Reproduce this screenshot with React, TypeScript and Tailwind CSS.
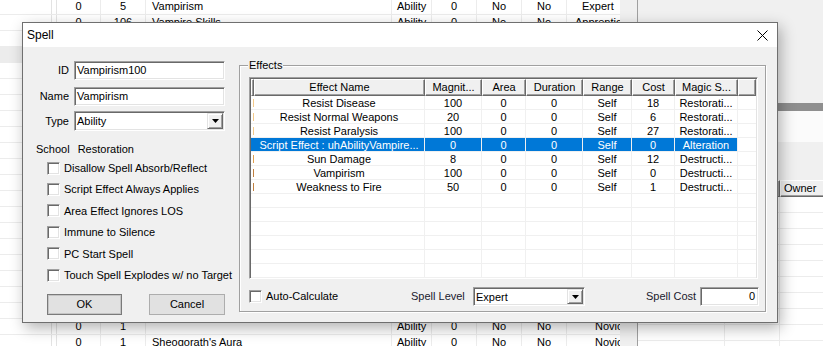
import React from "react";

const sunken =
  "border border-t-[#a0a0a0] border-l-[#a0a0a0] border-b-white border-r-white shadow-[inset_1px_1px_0_#696969,inset_-1px_-1px_0_#e3e3e3]";
const raised =
  "border border-t-[#e3e3e3] border-l-[#e3e3e3] border-b-[#696969] border-r-[#696969] shadow-[inset_1px_1px_0_#ffffff,inset_-1px_-1px_0_#a0a0a0] bg-[#f0f0f0]";
const headerCell =
  "h-full shrink-0 flex items-center justify-center overflow-hidden whitespace-nowrap border-t border-l border-t-white border-l-white border-r border-b border-r-[#696969] border-b-[#696969] shadow-[inset_-1px_-1px_0_#a0a0a0] bg-[#f0f0f0]";

type BgRow = { c: string[]; last: string; lastCls: string; sel?: boolean };

const emptyRow: BgRow = { c: ["", "", "", "", "", "", ""], last: "", lastCls: "" };

const bgRows: BgRow[] = [
  { c: ["0", "5", "Vampirism", "Ability", "0", "No", "No"], last: "Expert", lastCls: "pl-[15px]" },
  { c: ["0", "106", "Vampire Skills", "Ability", "0", "No", "No"], last: "Apprentice", lastCls: "pl-[8px]" },
  emptyRow,
  { ...emptyRow, sel: true },
  ...Array.from({ length: 16 }, () => emptyRow),
  { c: ["0", "1", "", "Ability", "0", "No", "No"], last: "Novice", lastCls: "pl-[28px]" },
  { c: ["0", "1", "Sheogorath's Aura", "Ability", "0", "No", "No"], last: "Novice", lastCls: "pl-[28px]" },
];

function BackgroundList() {
  return (
    <div className="w-[620px] h-full bg-white overflow-hidden shrink-0">
      <div className="mt-[-1px]">
        {bgRows.map((r, i) => (
          <div
            key={i}
            className={`flex h-[16px] border-b border-[#ececec] ${r.sel ? "bg-[#ececec]" : ""}`}
          >
            <div className="w-[52px] shrink-0 border-r border-[#e3e3e3]" />
            <div className="w-[5px] shrink-0 border-r border-[#e3e3e3]" />
            <div className="w-[44px] shrink-0 border-r border-[#ececec] text-center leading-[15px]">{r.c[0]}</div>
            <div className="w-[45px] shrink-0 border-r border-[#ececec] text-center leading-[15px]">{r.c[1]}</div>
            <div className="w-[246px] shrink-0 border-r border-[#ececec] pl-[6px] leading-[15px] whitespace-nowrap">{r.c[2]}</div>
            <div className="w-[40px] shrink-0 border-r border-[#ececec] pl-[5px] leading-[15px]">{r.c[3]}</div>
            <div className="w-[45px] shrink-0 border-r border-[#ececec] text-center leading-[15px]">{r.c[4]}</div>
            <div className="w-[45px] shrink-0 border-r border-[#ececec] text-center leading-[15px]">{r.c[5]}</div>
            <div className="w-[45px] shrink-0 border-r border-[#ececec] text-center leading-[15px]">{r.c[6]}</div>
            <div className={`w-[80px] shrink-0 leading-[15px] whitespace-nowrap ${r.lastCls}`}>{r.last}</div>
          </div>
        ))}
      </div>
    </div>
  );
}

function RightPane() {
  return (
    <div className="flex-1 flex flex-col border-l border-[#a0a0a0] bg-[#f0f0f0] overflow-hidden">
      <div className="h-[103px] shrink-0" />
      <div className="h-[8px] shrink-0 bg-[#8f8f8f]" />
      <div className="h-[31px] shrink-0 bg-[#fbfbfb]" />
      <div className="h-[38px] shrink-0" />
      <div className="flex h-[17px] shrink-0">
        <div className={`${headerCell} w-[142px]`} />
        <div className={`${headerCell} w-[80px] !justify-start pl-[3px]`}>Owner</div>
      </div>
      <div className="flex-1 bg-white">
        {Array.from({ length: 10 }).map((_, i) => (
          <div key={i} className="flex h-[16px] border-b border-[#ececec]">
            <div className="w-[87px] border-r border-[#ececec]" />
            <div className="w-[55px] border-r border-[#ececec]" />
          </div>
        ))}
      </div>
    </div>
  );
}

function Checkbox({ label }: { label: string }) {
  return (
    <div className="flex items-center h-[21.4px] pl-[24px]">
      <div className={`w-[13px] h-[13px] bg-white shrink-0 ${sunken}`} />
      <span className="ml-[4px] whitespace-nowrap">{label}</span>
    </div>
  );
}

function DropArrow() {
  return (
    <div className={`w-[16px] h-full shrink-0 flex items-center justify-center ${raised}`}>
      <svg width="7" height="4" viewBox="0 0 7 4">
        <polygon points="0,0 7,0 3.5,4" fill="#000" />
      </svg>
    </div>
  );
}

const cols = [3, 171, 57, 44, 57, 49, 43, 63];
const colW = ["w-[3px]", "w-[171px]", "w-[57px]", "w-[44px]", "w-[57px]", "w-[49px]", "w-[43px]", "w-[63px]"];
const headers = ["", "Effect Name", "Magnit...", "Area", "Duration", "Range", "Cost", "Magic S..."];

type Eff = { v: string[]; sel?: boolean; mark: string };
const effects: Eff[] = [
  { v: ["Resist Disease", "100", "0", "0", "Self", "18", "Restorati..."], mark: "bg-[#f3c98a]" },
  { v: ["Resist Normal Weapons", "20", "0", "0", "Self", "6", "Restorati..."], mark: "bg-[#f3c98a]" },
  { v: ["Resist Paralysis", "100", "0", "0", "Self", "27", "Restorati..."], mark: "bg-[#f3c98a]" },
  { v: ["Script Effect : uhAbilityVampire...", "0", "0", "0", "Self", "0", "Alteration"], sel: true, mark: "" },
  { v: ["Sun Damage", "8", "0", "0", "Self", "12", "Destructi..."], mark: "bg-[#e0a050]" },
  { v: ["Vampirism", "100", "0", "0", "Self", "0", "Destructi..."], mark: "bg-[#c08040]" },
  { v: ["Weakness to Fire", "50", "0", "0", "Self", "1", "Destructi..."], mark: "bg-[#c08040]" },
];

function EffectsList() {
  const blank = 7;
  return (
    <div className={`w-[509px] h-[202px] bg-white overflow-hidden p-[1px] ${sunken}`}>
      <div className="flex h-[17px]">
        {headers.map((h, i) => (
          <div key={i} className={`${headerCell} ${colW[i]}`}>
            {h}
          </div>
        ))}
        <div className={`${headerCell} flex-1`} />
      </div>
      {effects.map((e, r) => (
        <div key={r} className="flex h-[14px]">
          <div
            className={`${colW[0]} shrink-0 h-full flex items-center border-b border-[#f0f0f0] ${
              e.sel ? "bg-[#0078d7]" : ""
            }`}
          >
            {e.mark && <div className={`ml-[2px] w-[1px] h-[8px] ${e.mark}`} />}
          </div>
          {e.v.map((t, c) => (
            <div
              key={c}
              className={`${colW[c + 1]} shrink-0 h-full border-r border-b border-[#f0f0f0] text-center leading-[15px] whitespace-nowrap overflow-hidden ${
                e.sel ? "bg-[#0078d7] text-white" : ""
              }`}
            >
              {t}
            </div>
          ))}
          <div className="flex-1 h-full border-b border-[#f0f0f0]" />
        </div>
      ))}
      {Array.from({ length: blank }).map((_, r) => (
        <div key={r} className="flex h-[14px]">
          {cols.map((_, c) => (
            <div
              key={c}
              className={`${colW[c]} shrink-0 h-full border-b border-[#f0f0f0] ${c > 0 ? "border-r" : ""}`}
            />
          ))}
          <div className="flex-1 h-full border-b border-[#f0f0f0]" />
        </div>
      ))}
    </div>
  );
}

function Dialog() {
  return (
    <div className="absolute left-[22px] top-[22px] w-[756px] h-[301px] border border-[#6f6f6f] bg-[#f0f0f0] shadow-[3px_5px_14px_rgba(0,0,0,0.3)] flex flex-col">
      <div className="h-[24px] shrink-0 bg-white flex items-center justify-between pl-[4px]">
        <span className="text-[12px] leading-[14px]">Spell</span>
        <svg width="11" height="11" viewBox="0 0 11 11" className="mr-[9px]">
          <path d="M0.5 0.5 L10.5 10.5 M10.5 0.5 L0.5 10.5" stroke="#000" strokeWidth="1" />
        </svg>
      </div>
      <div className="flex-1 flex">
        {/* left column */}
        <div className="w-[216px] shrink-0 pt-[14px] flex flex-col">
          <div className="grid grid-cols-[46px_151px] gap-x-[5px] items-center">
            <span className="text-right leading-[19px]">ID</span>
            <div className={`h-[19px] bg-white flex items-center pl-[2px] ${sunken}`}>Vampirism100</div>
          </div>
          <div className="grid grid-cols-[46px_151px] gap-x-[5px] items-center mt-[7px]">
            <span className="text-right leading-[19px]">Name</span>
            <div className={`h-[19px] bg-white flex items-center pl-[2px] ${sunken}`}>Vampirism</div>
          </div>
          <div className="grid grid-cols-[46px_151px] gap-x-[5px] items-center mt-[5px]">
            <span className="text-right leading-[19px]">Type</span>
            <div className={`h-[20px] bg-white flex p-[1px] ${sunken}`}>
              <span className="flex-1 pl-[1px] leading-[16px]">Ability</span>
              <DropArrow />
            </div>
          </div>
          <div className="flex items-center h-[14px] mt-[11px] pl-[13px]">
            <span>School</span>
            <span className="ml-[8px]">Restoration</span>
          </div>
          <div className="mt-[1.5px] flex flex-col">
            <Checkbox label="Disallow Spell Absorb/Reflect" />
            <Checkbox label="Script Effect Always Applies" />
            <Checkbox label="Area Effect Ignores LOS" />
            <Checkbox label="Immune to Silence" />
            <Checkbox label="PC Start Spell" />
            <Checkbox label="Touch Spell Explodes w/ no Target" />
          </div>
          <div className="flex pl-[24px] gap-[27px] mt-[8px]">
            <button className="w-[75px] h-[21px] bg-[#e1e1e1] border border-[#7a7a7a] shadow-[inset_0_0_0_1px_#c4c4c4] text-[11px] leading-[19px]">
              OK
            </button>
            <button className="w-[76px] h-[21px] bg-[#e1e1e1] border border-[#adadad] text-[11px] leading-[19px]">
              Cancel
            </button>
          </div>
        </div>
        {/* effects group */}
        <div className="mt-[18px] w-[527px] h-[247px] relative border border-[#a0a0a0] shadow-[inset_1px_1px_0_#ffffff,1px_1px_0_#ffffff] pt-[11px] pl-[9px] flex flex-col">
          <span className="absolute left-[8px] top-[-8px] px-[1px] bg-[#f0f0f0] leading-[14px]">Effects</span>
          <EffectsList />
          <div className="flex items-center h-[19px] mt-[8px]">
            <div className="w-[162px] shrink-0 flex items-center">
              <div className={`w-[13px] h-[13px] bg-white shrink-0 ${sunken}`} />
              <span className="ml-[4px]">Auto-Calculate</span>
            </div>
            <span className="w-[62px] shrink-0 text-[#1a1a2e]">Spell Level</span>
            <div className={`w-[112px] h-[19px] shrink-0 bg-white flex p-[1px] ${sunken}`}>
              <span className="flex-1 pl-[1px] leading-[16px]">Expert</span>
              <DropArrow />
            </div>
            <div className="w-[61px] shrink-0" />
            <span className="w-[54px] shrink-0 text-[#1a1a2e]">Spell Cost</span>
            <div className={`w-[59px] h-[19px] shrink-0 bg-white flex items-center justify-end pr-[3px] ${sunken}`}>0</div>
          </div>
        </div>
      </div>
    </div>
  );
}

export default function App() {
  return (
    <div className="relative w-[823px] h-[346px] overflow-hidden bg-[#f0f0f0] font-['Liberation_Sans',Arial,sans-serif] text-[11px] text-black">
      <div className="flex h-full">
        <BackgroundList />
        <div className="w-[17px] shrink-0 bg-[#f0f0f0]" />
        <RightPane />
      </div>
      <Dialog />
    </div>
  );
}
